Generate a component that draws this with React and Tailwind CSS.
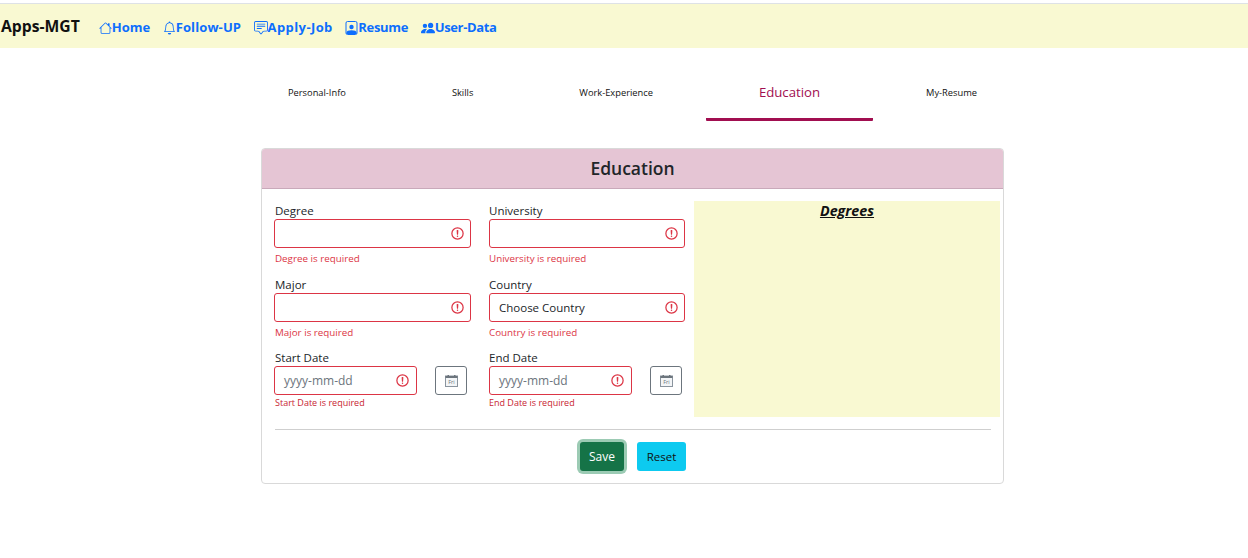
import { BsHouse, BsBell, BsChatSquareText, BsPeopleFill } from "react-icons/bs";

const font = { fontFamily: '"Open Sans", "Noto Sans", sans-serif' };

const ResumeIcon = ({ className }) => (
    <svg viewBox="0 0 12 14" className={className}>
        <rect x="0.5" y="0.5" width="11" height="13" rx="1.5" fill="none" stroke="currentColor" />
        <circle cx="6" cy="6" r="2.2" fill="currentColor" />
        <path d="M1 13v-1.5C1 10 3 9.3 6 9.3s5 .7 5 2.2V13z" fill="currentColor" />
    </svg>
);

const navLinks = [
    { label: "Home", Icon: BsHouse, text: "tracking-normal", size: "h-[14px] w-[13px]" },
    { label: "Follow-UP", Icon: BsBell, text: "tracking-[0.1px]", size: "h-[14px] w-[13px]" },
    { label: "Apply-Job", Icon: BsChatSquareText, text: "tracking-[0.4px]", size: "h-[14px] w-[14px]" },
    { label: "Resume", Icon: ResumeIcon, text: "tracking-[-0.3px]", size: "h-[14px] w-[13px]" },
    { label: "User-Data", Icon: BsPeopleFill, text: "tracking-[-0.35px]", size: "h-[14px] w-[14px]" },
];

const tabs = ["Personal-Info", "Skills", "Work-Experience", "Education", "My-Resume"];

const InvalidIcon = ({ right = "right-[5px]" }) => (
    <svg viewBox="0 0 12 12" className={`absolute top-[6px] h-[15px] w-[15px] ${right}`} fill="none" stroke="#dc3545">
        <circle cx="6" cy="6" r="4.5" />
        <path strokeLinejoin="round" d="M5.8 3.6h.4L6 6.5z" />
        <circle cx="6" cy="8.2" r=".6" fill="#dc3545" stroke="none" />
    </svg>
);

const CalendarIcon = () => (
    <svg viewBox="0 0 13 12" className="h-3 w-[13px]">
        <rect x="0.5" y="1" width="12" height="10.5" fill="#f3f5f7" stroke="#8a949e" />
        <rect x="0.5" y="1" width="12" height="2" fill="#6c757d" />
        <rect x="2.5" y="0" width="1.5" height="1.5" fill="#6c757d" />
        <rect x="9" y="0" width="1.5" height="1.5" fill="#6c757d" />
        <text x="6.5" y="9.2" textAnchor="middle" fontSize="5.5" fill="#6c757d">Fri</text>
    </svg>
);

const Field = ({ label, error, value, indent = "pl-px" }) => (
    <div>
        <label className={`block h-[15px] text-[11.5px] leading-[13px] text-[#212529] ${indent}`}>{label}</label>
        <div className="relative h-[29px] rounded-[3px] border border-[#dc3545] pl-[9px] text-[11.5px] leading-[27px] text-[#212529]">
            {value}
            <InvalidIcon />
        </div>
        <p className={`mt-[4px] text-[9.8px] leading-[14px] text-[#dc3545] ${indent}`}>{error}</p>
    </div>
);

const DateField = ({ label, error, gap, indent = "pl-px" }) => (
    <div>
        <label className={`block h-[15px] text-[11.5px] leading-[13px] text-[#212529] ${indent}`}>{label}</label>
        <div className={`flex justify-between ${gap}`}>
            <div className="relative h-[29px] w-[143px] rounded-[3px] border border-[#dc3545] pl-[9px] text-[12px] leading-[27px] text-[#6c757d]">
                yyyy-mm-dd
                <InvalidIcon right="right-[6px]" />
            </div>
            <button className="flex h-[29px] w-[32px] items-center justify-center rounded-[3px] border border-[#6c757d]">
                <CalendarIcon />
            </button>
        </div>
        <p className={`mt-[2px] text-[9px] leading-[12px] text-[#c81e32] ${indent}`}>{error}</p>
    </div>
);

export default function App() {
    return (
        <div style={font} className="min-h-[558px] bg-white pt-[3px]">
            {/* Navbar */}
            <nav className="flex h-[45px] items-center border-t border-[#dee2e6] bg-[#f9f9d2] pl-[1px]">
                <span className="mr-[19px] pt-[2px] text-[15.7px] font-bold text-[#111]">Apps-MGT</span>
                <div className="flex items-center gap-[12.5px] pt-[3px]">
                    {navLinks.map(({ label, Icon, text, size }) => (
                        <a key={label} className={`flex items-center text-[13px] font-bold text-[#0d6efd] ${text}`}>
                            <Icon className={size} />
                            {label}
                        </a>
                    ))}
                </div>
            </nav>

            {/* Tabs */}
            <div className="mt-[22px] flex pl-[235px]">
                {tabs.map((tab) =>
                    tab === "Education" ? (
                        <div key={tab} className="flex h-[51px] items-center rounded-[1px] border-b-[3px] border-[#a10e50] px-[53px] pb-[2px] text-[13.2px] font-medium text-[#a10e50]">
                            {tab}
                        </div>
                    ) : (
                        <div key={tab} className="flex h-[51px] items-center px-[53px] pb-[5px] text-[9.3px] text-[#111]">
                            {tab}
                        </div>
                    )
                )}
            </div>

            {/* Card */}
            <div className="ml-[261px] mt-[27px] h-[336px] w-[743px] rounded-[4px] border border-[#d9d9d9]">
                <div className="flex h-[40px] items-center justify-center rounded-t-[3px] border-b border-[#c9a9ba] bg-[#e5c5d4] text-[17.5px] font-semibold text-[#212529]">
                    Education
                </div>
                <div className="flex gap-[9px] pl-[12px] pt-[12px]">
                    <div className="grid w-[411px] grid-cols-[197px_196px] content-start gap-x-[18px] pt-[3px]">
                        <div className="h-[74px]"><Field label="Degree" error="Degree is required" /></div>
                        <div className="h-[74px]"><Field label="University" error="University is required" indent="pl-0" /></div>
                        <div className="h-[73px]"><Field label="Major" error="Major is required" /></div>
                        <div className="h-[73px]"><Field label="Country" error="Country is required" value="Choose Country" indent="pl-0" /></div>
                        <DateField label="Start Date" error="Start Date is required" gap="pr-1" />
                        <DateField label="End Date" error="End Date is required" gap="pr-[3px]" indent="pl-0" />
                    </div>
                    <div className="h-[216px] w-[306px] bg-[#f9f9d2] text-center text-[14.3px] leading-[19px] font-bold italic text-[#111] underline">
                        Degrees
                    </div>
                </div>
                <div className="ml-[13px] mt-[12px] h-px w-[716px] bg-[#cfcfcf]" />
                <div className="ml-[318px] mt-[12px] flex items-center gap-[13px]">
                    <button className="h-[29px] w-[44px] rounded-[3px] bg-[#157347] text-[12px] text-white ring-[3px] ring-[#9ccbb4]">
                        Save
                    </button>
                    <button className="h-[29px] w-[49px] rounded-[3px] bg-[#0dcaf0] text-[11.5px] text-[#111]">
                        Reset
                    </button>
                </div>
            </div>
        </div>
    );
}
